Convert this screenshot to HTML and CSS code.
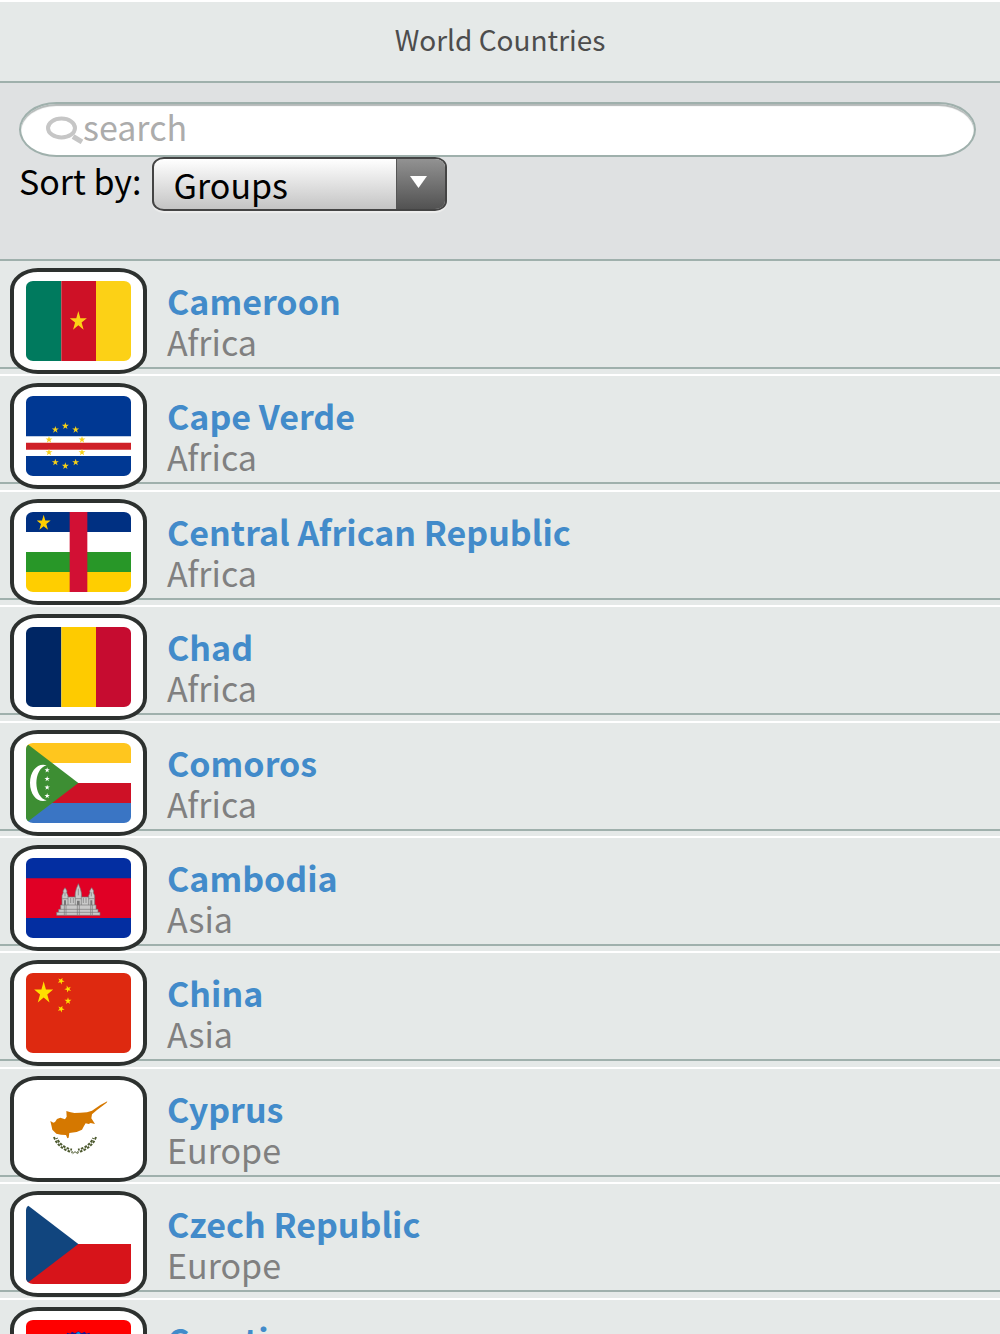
FILE: index.html
```html
<!DOCTYPE html>
<html lang="en">
<head>
    <meta charset="UTF-8">
    <meta name="viewport" content="width=device-width, initial-scale=1.0">
    <title>World Countries</title>
    <link rel="stylesheet" href="styles.css">
</head>
<body>
    <!-- Shared star shape -->
    <svg class="defs" width="0" height="0" aria-hidden="true">
        <symbol id="star" viewBox="-10 -10 20 20" overflow="visible">
            <path d="M0-10 2.25-3.09 9.51-3.09 3.63 1.18 5.88 8.09 0 3.82-5.88 8.09-3.63 1.18-9.51-3.09-2.25-3.09z"/>
        </symbol>
    </svg>

    <header class="title-bar">
        <h1>World Countries</h1>
    </header>

    <!-- Search + sort -->
    <form class="filter">
        <div class="search-box">
            <svg class="search-icon" viewBox="0 0 38 28" aria-hidden="true">
                <ellipse cx="15.500" cy="12" rx="13.500" ry="9.500" fill="none" stroke="#c6c6c6" stroke-width="4"/>
                <path d="M27 20.500 36 26" stroke="#c6c6c6" stroke-width="5"/>
            </svg>
            <input type="search" id="search" placeholder="search" aria-label="search">
        </div>
        <div class="sort-row">
            <label for="sort">Sort by:</label>
            <div class="select-box">
                <select id="sort">
                    <option>Groups</option>
                    <option>Name</option>
                </select>
                <span class="select-arrow">
                    <svg viewBox="0 0 17 12" aria-hidden="true"><path d="M0 0h17L8.500 12z" fill="#fff"/></svg>
                </span>
            </div>
        </div>
    </form>

    <ul class="countries">
        <li>
            <a href="#cameroon">
                <span class="frame">
                    <svg class="flag" viewBox="0 0 315 240" preserveAspectRatio="none" aria-hidden="true">
                        <path fill="#007a5e" d="M0 0h106v240H0z"/>
                        <path fill="#ce1126" d="M106 0h104v240H106z"/>
                        <path fill="#fcd116" d="M210 0h105v240H210z"/>
                        <g fill="#fcd116" transform="translate(157 121) scale(2.700 3.100)"><use href="#star" x="-10" y="-10" width="20" height="20"/></g>
                    </svg>
                </span>
                <span class="info"><strong>Cameroon</strong><span>Africa</span></span>
            </a>
        </li>
        <li>
            <a href="#cape-verde">
                <span class="frame">
                    <svg class="flag" viewBox="0 0 315 240" preserveAspectRatio="none" aria-hidden="true">
                        <path fill="#003893" d="M0 0h315v240H0z"/>
                        <path fill="#fff" d="M0 121h315v59H0z"/>
                        <path fill="#cf2027" d="M0 140h315v21H0z"/>
                        <g fill="#f7d116">
                            <use href="#star" x="107" y="79" width="22" height="22"/>
                            <use href="#star" x="138" y="90" width="22" height="22"/>
                            <use href="#star" x="157" y="120" width="22" height="22"/>
                            <use href="#star" x="157" y="158" width="22" height="22"/>
                            <use href="#star" x="138" y="188" width="22" height="22"/>
                            <use href="#star" x="107" y="199" width="22" height="22"/>
                            <use href="#star" x="77" y="188" width="22" height="22"/>
                            <use href="#star" x="58" y="158" width="22" height="22"/>
                            <use href="#star" x="58" y="120" width="22" height="22"/>
                            <use href="#star" x="77" y="90" width="22" height="22"/>
                        </g>
                    </svg>
                </span>
                <span class="info"><strong>Cape Verde</strong><span>Africa</span></span>
            </a>
        </li>
        <li>
            <a href="#central-african-republic">
                <span class="frame">
                    <svg class="flag" viewBox="0 0 315 240" preserveAspectRatio="none" aria-hidden="true">
                        <path fill="#003082" d="M0 0h315v60H0z"/>
                        <path fill="#fff" d="M0 60h315v60H0z"/>
                        <path fill="#289728" d="M0 120h315v60H0z"/>
                        <path fill="#ffce00" d="M0 180h315v60H0z"/>
                        <path fill="#d21034" d="M131 0h53v240h-53z"/>
                        <g fill="#ffce00" transform="translate(53 33) scale(2.200 2.500)"><use href="#star" x="-10" y="-10" width="20" height="20"/></g>
                    </svg>
                </span>
                <span class="info"><strong>Central African Republic</strong><span>Africa</span></span>
            </a>
        </li>
        <li>
            <a href="#chad">
                <span class="frame">
                    <svg class="flag" viewBox="0 0 315 240" preserveAspectRatio="none" aria-hidden="true">
                        <path fill="#002664" d="M0 0h106v240H0z"/>
                        <path fill="#fecb00" d="M106 0h104v240H106z"/>
                        <path fill="#c60c30" d="M210 0h105v240H210z"/>
                    </svg>
                </span>
                <span class="info"><strong>Chad</strong><span>Africa</span></span>
            </a>
        </li>
        <li>
            <a href="#comoros">
                <span class="frame">
                    <svg class="flag" viewBox="0 0 315 240" preserveAspectRatio="none" aria-hidden="true">
                        <path fill="#ffc61e" d="M0 0h315v60H0z"/>
                        <path fill="#fff" d="M0 60h315v60H0z"/>
                        <path fill="#ce1126" d="M0 120h315v60H0z"/>
                        <path fill="#3a75c4" d="M0 180h315v60H0z"/>
                        <path fill="#3d8e33" d="M0 0 157 120 0 240z"/>
                        <path fill="#fff" d="M62 67C37 58 12 82 12 120s25 61 50 52C22 164 20 78 62 67z"/>
                        <g fill="#fff">
                            <use href="#star" x="55" y="73" width="17" height="17"/>
                            <use href="#star" x="55" y="99" width="17" height="17"/>
                            <use href="#star" x="55" y="125" width="17" height="17"/>
                            <use href="#star" x="55" y="150" width="17" height="17"/>
                        </g>
                    </svg>
                </span>
                <span class="info"><strong>Comoros</strong><span>Africa</span></span>
            </a>
        </li>
        <li>
            <a href="#cambodia">
                <span class="frame">
                    <svg class="flag" viewBox="0 0 315 240" preserveAspectRatio="none" aria-hidden="true">
                        <path fill="#032ea1" d="M0 0h315v240H0z"/>
                        <path fill="#e00025" d="M0 61h315v119H0z"/>
                        <g fill="#c9c9c9" stroke="#777" stroke-width="2">
                            <path d="M92 172v-9h6v-9h6v-13h4v-28l4-9-1-5 4-7 2-3 2 3 4 7-1 5 4 9v4h21l1-13 3-12 3-7 3-8 3 8 3 7 3 12 1 13h21v-4l4-9-1-5 4-7 2-3 2 3 4 7-1 5 4 9v28h4v13h6v9h6v9z"/>
                            <path fill="none" d="M98 163h118M104 154h106M108 141h98M109 122h17M148 122h18M188 122h17M115 141v31M120 141v31M154 141v31M160 141v31M194 141v31M199 141v31M126 115v26M148 113v28M166 113v28M188 115v26M117 103v12M196 103v12M157 92v20M134 120v15M142 120v15M172 120v15M180 120v15"/>
                        </g>
                        <path fill="#777" d="M153 128h8v13h-8zM114 127h6v14h-6zM193 127h6v14h-6z"/>
                    </svg>
                </span>
                <span class="info"><strong>Cambodia</strong><span>Asia</span></span>
            </a>
        </li>
        <li>
            <a href="#china">
                <span class="frame">
                    <svg class="flag" viewBox="0 0 315 240" preserveAspectRatio="none" aria-hidden="true">
                        <path fill="#de2910" d="M0 0h315v240H0z"/>
                        <g fill="#ffde00">
                            <g transform="translate(53 60) scale(3 3.500)"><use href="#star" x="-10" y="-10" width="20" height="20"/></g>
                            <g transform="translate(105 24) rotate(25)"><use href="#star" x="-11" y="-11" width="22" height="22"/></g>
                            <g transform="translate(126 48) rotate(50)"><use href="#star" x="-11" y="-11" width="22" height="22"/></g>
                            <g transform="translate(126 84)"><use href="#star" x="-11" y="-11" width="22" height="22"/></g>
                            <g transform="translate(105 108) rotate(25)"><use href="#star" x="-11" y="-11" width="22" height="22"/></g>
                        </g>
                    </svg>
                </span>
                <span class="info"><strong>China</strong><span>Asia</span></span>
            </a>
        </li>
        <li>
            <a href="#cyprus">
                <span class="frame">
                    <svg class="flag" viewBox="0 0 315 240" preserveAspectRatio="none" aria-hidden="true">
                        <path fill="#fff" d="M0 0h315v240H0z"/>
                        <path fill="#d57800" d="M73 96l9 5 5-2 6-9 10-4 14 5 5-8-1-17 10 3 14 3 18-1 20-1 15-5 25-17 21-11-2 4-29 22-15 13-2 12 11 17-13-3-6 3-9-2-5 8-6 11-16 7-22 3-2 14-4 2-4-10-15-1-14-3-12-12-3-13z"/>
                        <g fill="none" stroke="#4e5b31" stroke-width="6" stroke-dasharray="8 4">
                            <path d="M84 144c8 22 26 39 56 46"/>
                            <path stroke-dashoffset="5" d="M92 147c8 18 24 30 46 35"/>
                            <path d="M210 144c-8 22-26 39-56 46"/>
                            <path stroke-dashoffset="5" d="M202 147c-8 18-24 30-46 35"/>
                        </g>
                        <path fill="none" stroke="#4e5b31" stroke-width="3" d="M140 194l7-6 8 6"/>
                    </svg>
                </span>
                <span class="info"><strong>Cyprus</strong><span>Europe</span></span>
            </a>
        </li>
        <li>
            <a href="#czech-republic">
                <span class="frame">
                    <svg class="flag" viewBox="0 0 315 240" preserveAspectRatio="none" aria-hidden="true">
                        <path fill="#fff" d="M0 0h315v120H0z"/>
                        <path fill="#d7141a" d="M0 120h315v120H0z"/>
                        <path fill="#11457e" d="M0 0 157 120 0 240z"/>
                    </svg>
                </span>
                <span class="info"><strong>Czech Republic</strong><span>Europe</span></span>
            </a>
        </li>
        <li>
            <a href="#croatia">
                <span class="frame">
                    <svg class="flag" viewBox="0 0 315 240" preserveAspectRatio="none" aria-hidden="true">
                        <path fill="#f00" d="M0 0h315v80H0z"/>
                        <path fill="#fff" d="M0 80h315v80H0z"/>
                        <path fill="#171796" d="M0 160h315v80H0z"/>
                        <path fill="#fff" d="M121 60h72v80q0 36-36 44-36-8-36-44z"/>
                        <path fill="#f00" d="M121 60h14v20h-14zM150 60h14v20h-14zM179 60h14v20h-14zM135 80h15v20h-15zM164 80h15v20h-15zM121 100h14v20h-14zM150 100h14v20h-14zM179 100h14v20h-14zM135 120h15v20h-15zM164 120h15v20h-15zM150 140h14v20h-14z"/>
                        <path fill="#171796" d="M121 60l2-22 10 3 5-6 9 5 10-6 10 6 9-5 5 6 10-3 2 22z"/>
                        <path fill="#0093dd" d="M128 41l7 2 2 15h-8zM151 39l6-4 6 4v19h-12zM179 43l7-2-1 17h-8z"/>
                    </svg>
                </span>
                <span class="info"><strong>Croatia</strong><span>Europe</span></span>
            </a>
        </li>
    </ul>
</body>
</html>
```
FILE: styles.css
```css
* {
    box-sizing: border-box;
}

body {
    margin: 0;
    height: 100vh;
    display: flex;
    flex-direction: column;
    background-color: #e5e9e8;
    font-family: "Noto Sans CJK JP", "Noto Sans", sans-serif;
}

.defs {
    position: absolute;
}

/* Title */
.title-bar {
    padding: 17px 20px 22px;
    border-top: 2px solid #fff;
    border-bottom: 2px solid #9fb0ac;
    text-align: center;
}

.title-bar h1 {
    margin: 0;
    font-size: 28px;
    font-weight: 400;
    line-height: 40px;
    color: #4d4d4d;
}

/* Search + sort */
.filter {
    padding: 19px 24px 48px 19px;
    background-color: #dfe1e2;
    border-bottom: 2px solid #9fb0ac;
}

.search-box {
    position: relative;
}

.search-icon {
    position: absolute;
    left: 27px;
    top: 14px;
    width: 38px;
    height: 28px;
}

.search-box input {
    display: block;
    width: 100%;
    height: 55px;
    padding: 0 24px 6px 62px;
    border: 2px solid #9fb0ac;
    border-radius: 38px / 28px;
    background-color: #fff;
    box-shadow: inset 0 2px 1px #b4b9b8;
    font-family: inherit;
    font-size: 34px;
    color: #000;
    appearance: none;
    outline: none;
}

.search-box input::placeholder {
    color: #acacac;
    opacity: 1;
}

.sort-row {
    display: flex;
    gap: 10px;
    font-size: 34px;
}

.sort-row label {
    line-height: 48px;
}

.select-box {
    position: relative;
    width: 295px;
}

.select-box select {
    display: block;
    width: 100%;
    height: 54px;
    padding: 0 60px 0 20px;
    border: 2px solid #444;
    border-radius: 12px / 10px;
    background: linear-gradient(#fff, #c4c4c4);
    box-shadow: 0 2px 1px #eee;
    font-family: inherit;
    font-size: 34px;
    color: #000;
    appearance: none;
}

.select-arrow {
    position: absolute;
    top: 2px;
    right: 2px;
    bottom: 2px;
    width: 49px;
    display: flex;
    align-items: center;
    justify-content: center;
    border-left: 1px solid #555;
    border-radius: 0 10px 10px 0 / 0 8px 8px 0;
    background: linear-gradient(#929292, #525252);
    pointer-events: none;
}

.select-arrow svg {
    width: 17px;
    height: 12px;
    margin: 0 4px 4px 0;
}

/* Country list */
.countries {
    flex: 1;
    min-height: 0;
    margin: -2px 0 0;
    padding: 0;
    display: grid;
    grid-auto-rows: 115px 116px 115px 116px 115px;
    overflow-y: auto;
    scrollbar-width: none;
    list-style: none;
}

.countries li {
    border-top: 2px solid #fff;
}

.countries li:first-child {
    border-top-color: transparent;
}

.countries a {
    display: flex;
    gap: 20px;
    padding: 7px 10px 0;
    border-bottom: 2px solid #9fb0ac;
    color: #808080;
    text-decoration: none;
}

.frame {
    flex: none;
    position: relative;
    margin-bottom: -7px;
    padding: 9px 12px;
    border: 4px solid #2d312f;
    border-radius: 28px / 22px;
    background-color: #fff;
}

.flag {
    display: block;
    width: 105px;
    height: 80px;
    border-radius: 7px / 6px;
}

.info {
    display: flex;
    flex-direction: column;
    padding-top: 12px;
    font-size: 34px;
    line-height: 41px;
    white-space: nowrap;
}

.info strong {
    color: #428bca;
}
```
